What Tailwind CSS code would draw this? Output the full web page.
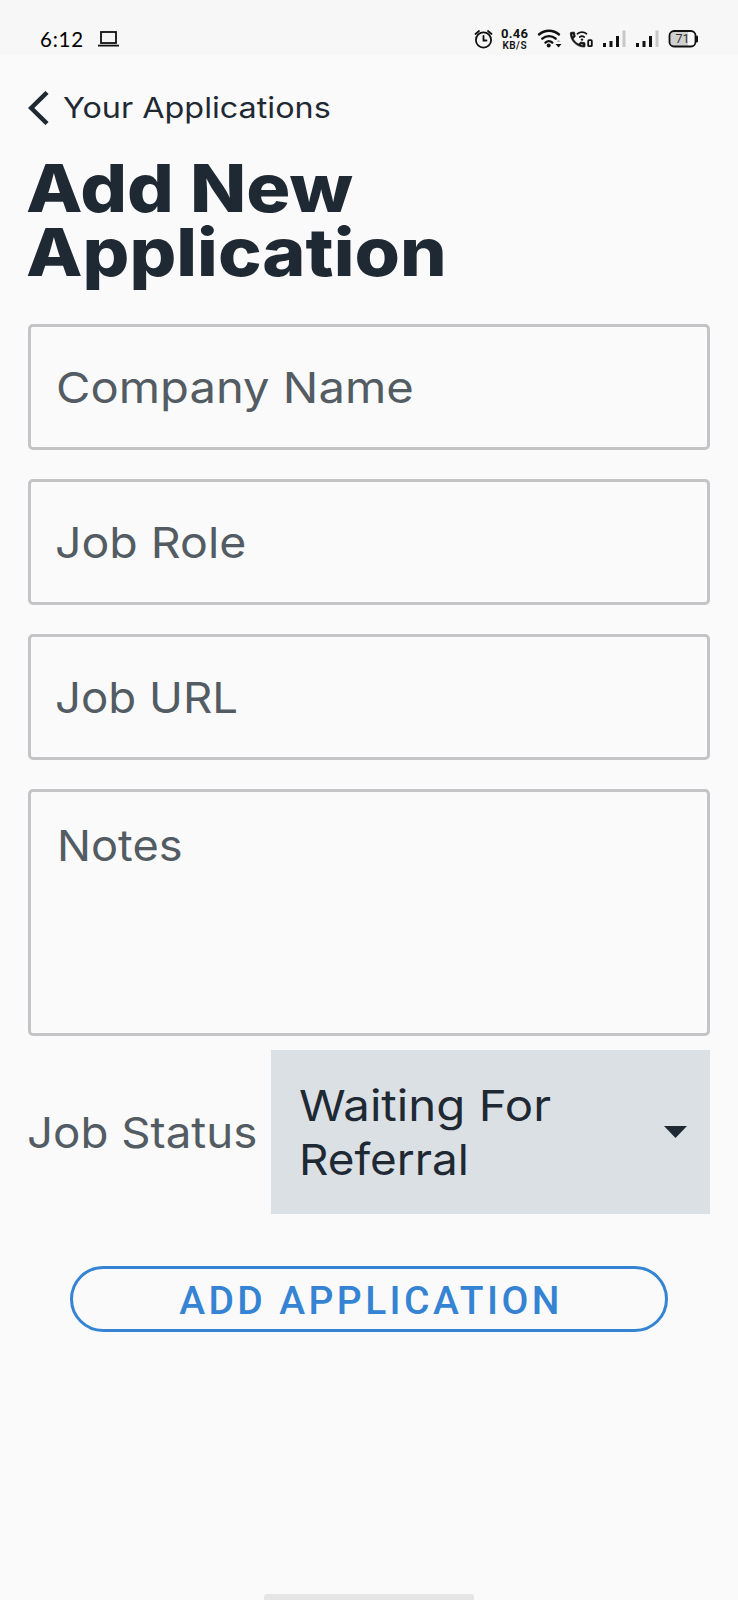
<!DOCTYPE html>
<html lang="en">
<head>
<meta charset="utf-8">
<title>Add New Application</title>
<script src="https://cdn.jsdelivr.net/npm/@tailwindcss/browser@4"></script>
</head>
<body class="bg-[#fafafa]">
<div class="flex h-[1600px] w-[738px] flex-col overflow-hidden bg-[#fafafa] font-['Inter',sans-serif] text-[#1f2933]">
  <header class="flex h-[55px] shrink-0 items-start bg-[#f7f7f7] pl-[40px] text-black">
    <span class="mt-[27px] w-[57px] font-['Lato',sans-serif] text-[20.5px] leading-6 tracking-[0.8px]">6:12</span>
    <svg class="mt-[30px] h-[18px] w-[23px]" viewBox="0 0 23 18" fill="none" stroke="#111" stroke-width="1.8"><rect x="4" y="2" width="15" height="11"/><path d="M1 15.600H22"/></svg>
    <svg class="mt-[5px] mr-[15px] ml-auto h-[50px] w-[263px]" viewBox="460 5 263 50" fill="none" stroke="#111" stroke-linecap="round">
      <g stroke-width="1.8"><circle cx="483.500" cy="40" r="7.600"/><path d="M483.500 36v4.500h3M475.500 34l3.500-3M491.500 34l-3.500-3"/></g>
      <g fill="#111" stroke="none" font-family="Roboto, sans-serif" font-weight="700"><text x="501" y="38.300" font-size="13" textLength="27">0.46</text><text x="502.500" y="49" font-size="10" font-weight="600" textLength="24">KB/S</text></g>
      <g stroke-width="2.4"><path d="M539 34.500a15 15 0 0 1 20 0M542.300 38.700a10 10 0 0 1 13.400 0M545.500 42.600a5 5 0 0 1 6.800 0"/></g>
      <circle cx="548.700" cy="45.600" r="2" fill="#111" stroke="none"/><path d="M555.500 44h6l-3 3.500z" fill="#111" stroke="none"/><path d="M556.500 42l2-2.500 2 2.500z" fill="#bbb" stroke="none"/>
      <path transform="translate(567.800 29.800) scale(.82)" fill="#111" stroke-width=".8" d="M6.540 5c.06.89.21 1.760.45 2.590l-1.200 1.200c-.41-1.200-.67-2.470-.76-3.790h1.510m9.860 12.020c.85.24 1.720.39 2.600.45v1.490c-1.320-.09-2.590-.35-3.800-.75l1.200-1.190M7.500 3H4c-.55 0-1 .45-1 1 0 9.390 7.610 17 17 17 .55 0 1-.45 1-1v-3.490c0-.55-.45-1-1-1-1.240 0-2.450-.2-3.570-.57-.1-.04-.21-.05-.31-.05-.26 0-.51.1-.71.29l-2.200 2.200c-2.830-1.450-5.150-3.760-6.590-6.590l2.200-2.200c.28-.28.36-.67.25-1.020C8.700 6.450 8.500 5.250 8.500 4c0-.55-.45-1-1-1z"/>
      <path d="M577.500 33.800q4.500-3.300 9 0M579.800 37q2.200-1.600 4.400 0" stroke-width="1.700"/><circle cx="582" cy="39.600" r="1.200" fill="#111" stroke="none"/>
      <rect x="588.200" y="40.200" width="3.600" height="6" rx=".8" stroke-width="1.800"/>
      <g fill="#111" stroke="none"><path d="M603 43h3v4h-3zM609.500 41h3v6h-3zM616 36h3v11h-3zM636 43h3v4h-3zM642.500 41h3v6h-3zM649 36h3v11h-3z"/><path fill="#c8c8c8" d="M622.500 30.500h3V47h-3zM655.500 30.500h3V47h-3z"/></g>
      <path d="M672 31.500h16v15h-16q-2.500-1-2.500-3v-9q0-2 2.500-3z" fill="#d0d0d0" stroke="none"/>
      <rect x="669.500" y="31" width="26" height="15.500" rx="4.500" stroke-width="1.800"/><path d="M697 36.500v5" stroke-width="2"/>
      <text x="675.500" y="43.300" font-family="Roboto, sans-serif" font-size="12.500" fill="#333" stroke="none" textLength="14">71</text>
    </svg>
  </header>

  <main class="flex flex-col px-[28px]">
    <nav class="flex h-[89px] items-start pt-[35px]">
      <svg class="mt-px h-[34px] w-[21px]" viewBox="0 0 21 34" fill="none" stroke="#1f2933" stroke-width="4.500"><path d="M19 1.500L3.200 17L19 32.500"/></svg>
      <span class="ml-[14px] inline-block origin-left scale-x-[1.115] text-[29px] leading-[36px] whitespace-nowrap">Your Applications</span>
    </nav>
    <h1 class="mt-[12px] flex h-[168px] flex-col items-start text-[66.5px] leading-[64px] font-extrabold whitespace-nowrap">
      <span class="-ml-[2px] block origin-left scale-x-[1.105]">Add New</span>
      <span class="-ml-[2px] block origin-left scale-x-[1.105]">Application</span>
    </h1>
    <form class="flex flex-col">
      <div class="flex flex-col gap-[29px] text-[43px] text-[#535c63]">
        <div class="flex h-[126px] items-center rounded-[5px] border-3 border-[#c4c4c6] pl-[25px]"><span class="origin-left scale-x-[1.097]">Company Name</span></div>
        <div class="flex h-[126px] items-center rounded-[5px] border-3 border-[#c4c4c6] pl-[24px]"><span class="origin-left scale-x-[1.080]">Job Role</span></div>
        <div class="flex h-[126px] items-center rounded-[5px] border-3 border-[#c4c4c6] pl-[24px]"><span class="origin-left scale-x-[1.060]">Job URL</span></div>
        <div class="flex h-[247px] items-start rounded-[5px] border-3 border-[#c4c4c6] pt-[26px] pl-[26px] leading-[54px]"><span class="origin-left scale-x-[1.050]">Notes</span></div>
      </div>
      <div class="mt-[14px] flex h-[164px] items-center text-[43px] leading-[54px]">
        <div class="flex w-[243px] text-[#535c63] whitespace-nowrap"><span class="-ml-px origin-left scale-x-[1.062]">Job Status</span></div>
        <div class="flex h-full flex-1 items-center justify-between bg-[#dbe0e4] pr-[23px] pl-[28px]">
          <span class="flex flex-col items-start whitespace-nowrap"><span class="origin-left scale-x-[1.102]">Waiting For</span><span class="origin-left scale-x-[1.065]">Referral</span></span>
          <svg class="h-[12px] w-[23px]" viewBox="0 0 23 12"><path d="M0 0H23L11.500 12z" fill="#1f2933"/></svg>
        </div>
      </div>
      <button type="button" class="mx-[42px] mt-[52px] flex h-[66px] items-center justify-center rounded-full border-3 border-[#3583d3] pt-[5px] pl-[4px] font-['Roboto',sans-serif] text-[39px] font-medium tracking-[3.4px] text-[#3583d3] whitespace-nowrap">ADD APPLICATION</button>
    </form>
  </main>
  <div class="mt-auto h-[6px] w-[210px] shrink-0 self-center rounded-t-[3px] bg-[#e5e5e5]"></div>
</div>
</body>
</html>
